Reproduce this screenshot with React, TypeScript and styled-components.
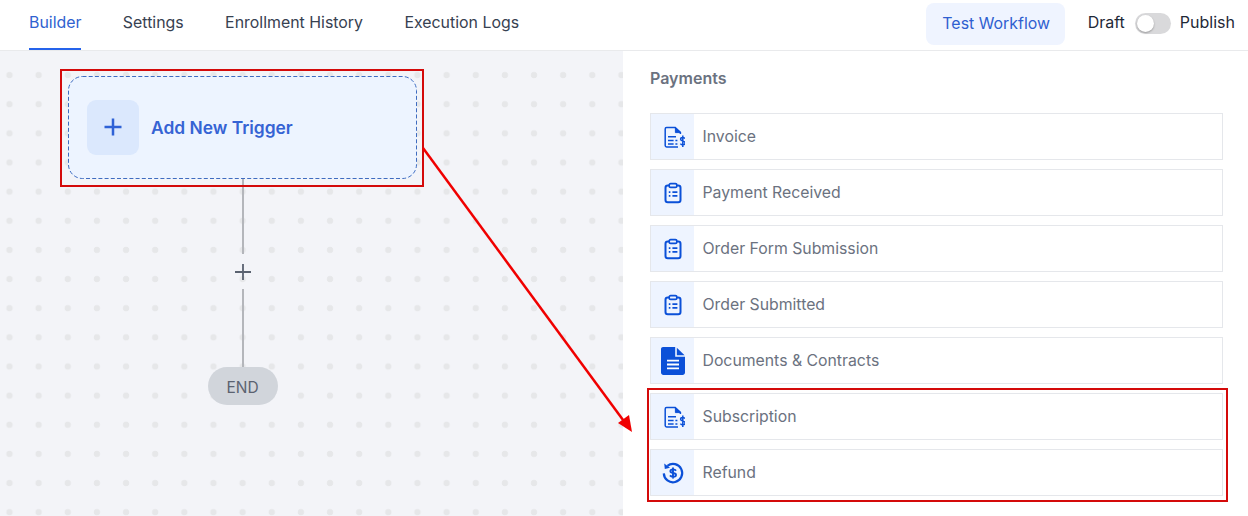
import React, { useState } from "react";
import styled, { createGlobalStyle } from "styled-components";

const BLUE = "#0b50d8";

const InvoiceIcon = () => (
  <svg width="24" height="24" viewBox="0 0 24 24" fill="none" stroke={BLUE} strokeWidth="1.5">
    <path d="M19.4 9V7.4L14.2 2.6H5.6C4.7 2.6 4.2 3.1 4.2 4V20.6C4.2 21.5 4.7 22 5.6 22H17" />
    <path d="M14.4 2.8V7.6H19.2Z" fill={BLUE} strokeWidth="1" />
    <path d="M7 11.8H15M7 15.4H12.6M14.4 15.4H16.4M7 19H12.6M14.4 19H16.4" />
    <path d="M24 13.6C23.5 12.9 22.7 12.5 21.7 12.5C20.5 12.5 19.6 13.2 19.6 14.2C19.6 16.6 24.2 15.6 24.2 18C24.2 19.1 23.3 19.8 21.9 19.8C20.8 19.8 19.9 19.3 19.4 18.6M21.8 10.6V22" />
  </svg>
);

const ClipboardIcon = () => (
  <svg width="24" height="24" viewBox="0 0 24 24" fill="none" stroke={BLUE} strokeWidth="2">
    <path d="M8 4.4H6.8C5.5 4.4 4.5 5.4 4.5 6.7V18.9C4.5 20.2 5.5 21.2 6.8 21.2H17.2C18.5 21.2 19.5 20.2 19.5 18.9V6.7C19.5 5.4 18.5 4.4 17.2 4.4H16" />
    <rect x="8.2" y="2.6" width="7.6" height="3.8" rx="1.4" strokeWidth="1.7" />
    <path d="M7.8 11.2H9.4M11.4 11.2H16.4M7.8 14.8H9.4M11.4 14.8H16.4" strokeWidth="1.8" />
  </svg>
);

const DocumentIcon = () => (
  <svg width="24" height="28" viewBox="0 0 24 28" fill="none">
    <path d="M2 0H14.2V9.8H24V25.6C24 26.9 22.9 28 21.6 28H2.4C1.1 28 0 26.9 0 25.6V2C0 .9 .9 0 2 0Z" fill={BLUE} />
    <path d="M15.8 .8L23.6 8.2H15.8Z" fill={BLUE} />
    <path d="M6 13.6H18M6 17.5H18M6 21.4H18" stroke="#fff" strokeWidth="1.8" />
  </svg>
);

const RefundIcon = () => (
  <svg width="24" height="24" viewBox="0 0 24 24" fill="none" stroke={BLUE} strokeWidth="2.2">
    <path d="M6.4 4.8A9.2 9.2 0 1 1 2.8 12.4" />
    <path d="M3.2 2.6L3.8 8L9 6.8Z" fill={BLUE} stroke="none" />
    <path d="M15 9.7C14.5 8.9 13.4 8.4 12.1 8.4C10.5 8.4 9.4 9.1 9.4 10.2C9.4 12.7 15 11.4 15 13.9C15 15 13.8 15.7 12.1 15.7C10.7 15.7 9.6 15.2 9 14.4M12 6.6V17.5" strokeWidth="1.9" />
  </svg>
);

const triggers = [
  { label: "Invoice", icon: <InvoiceIcon /> },
  { label: "Payment Received", icon: <ClipboardIcon /> },
  { label: "Order Form Submission", icon: <ClipboardIcon /> },
  { label: "Order Submitted", icon: <ClipboardIcon /> },
  { label: "Documents & Contracts", icon: <DocumentIcon /> },
  { label: "Subscription", icon: <InvoiceIcon /> },
  { label: "Refund", icon: <RefundIcon /> },
];

const tabs = ["Builder", "Settings", "Enrollment History", "Execution Logs"];

const App = () => {
  const [active, setActive] = useState("Builder");
  const [published, setPublished] = useState(false);

  return (
    <Page>
      <GlobalStyle />
      <Header>
        <Tabs>
          {tabs.map((tab) => (
            <Tab key={tab} $active={tab === active} onClick={() => setActive(tab)}>
              {tab}
            </Tab>
          ))}
        </Tabs>
        <Actions>
          <TestButton>Test Workflow</TestButton>
          <ToggleLabel>Draft</ToggleLabel>
          <Toggle onClick={() => setPublished(!published)}>
            <Knob $on={published} />
          </Toggle>
          <ToggleLabel>Publish</ToggleLabel>
        </Actions>
      </Header>
      <Main>
        <Canvas>
          <Flow>
            <TriggerCard>
              <DashedEdge>
                <rect x="0.5" y="0.5" width="348" height="102" rx="14" fill="none" stroke="#3f6cc0" strokeDasharray="4 2.2" />
              </DashedEdge>
              <TriggerIcon>
                <svg width="20" height="20" viewBox="0 0 20 20" fill="none" stroke="#2f62d6" strokeWidth="2.5">
                  <path d="M10 1.5V18.5M1.5 10H18.5" />
                </svg>
              </TriggerIcon>
              <TriggerText>Add New Trigger</TriggerText>
            </TriggerCard>
            <Line $height={75} />
            <AddStep>
              <svg width="16" height="16" viewBox="0 0 16 16" fill="none" stroke="#5a6270" strokeWidth="1.8">
                <path d="M8 0V16M0 8H16" />
              </svg>
            </AddStep>
            <Line $height={78} />
            <EndPill>END</EndPill>
          </Flow>
        </Canvas>
        <Panel>
          <PanelTitle>Payments</PanelTitle>
          <List>
            {triggers.map((item) => (
              <Row key={item.label}>
                <RowIcon>{item.icon}</RowIcon>
                <RowLabel>{item.label}</RowLabel>
              </Row>
            ))}
          </List>
        </Panel>
      </Main>
      <SourceBox />
      <TargetBox />
      <Arrow width="1248" height="516" viewBox="0 0 1248 516">
        <line x1="423" y1="148" x2="626" y2="424" stroke="#f00000" strokeWidth="2.5" />
        <path d="M632 432L618 423L629 415Z" fill="#f00000" />
      </Arrow>
    </Page>
  );
};

export default App;

const GlobalStyle = createGlobalStyle`
  html, body {
    margin: 0;
    padding: 0;
    background: #fff;
  }
  * {
    box-sizing: border-box;
  }
`;

const Page = styled.div`
  position: relative;
  width: 1248px;
  height: 516px;
  overflow: hidden;
  font-family: Inter, "Liberation Sans", sans-serif;
`;

const Header = styled.div`
  display: flex;
  justify-content: space-between;
  height: 51px;
  padding: 0 13px 0 29px;
  border-bottom: 1px solid #e9eaec;
`;

const Tabs = styled.div`
  display: flex;
  gap: 41.4px;
`;

const Tab = styled.div<{ $active: boolean }>`
  height: 50px;
  padding-top: 13px;
  font-size: 15.9px;
  line-height: 19px;
  color: ${(p) => (p.$active ? "#2f62d0" : "#374151")};
  border-bottom: 2px solid ${(p) => (p.$active ? "#2563eb" : "transparent")};
  cursor: pointer;
`;

const Actions = styled.div`
  display: flex;
  align-items: flex-start;
  padding-top: 3px;
`;

const TestButton = styled.button`
  width: 139px;
  height: 42px;
  margin-right: 23px;
  padding: 0 0 2px 2px;
  border: none;
  border-radius: 8px;
  background: #eff4ff;
  color: #2f5fd0;
  font-family: inherit;
  font-size: 15.9px;
`;

const ToggleLabel = styled.span`
  padding-top: 10px;
  font-size: 16px;
  line-height: 19px;
  color: #1f2937;
`;

const Toggle = styled.div`
  width: 36px;
  height: 21px;
  margin: 10px 9px 0 10px;
  padding: 2px;
  border-radius: 11px;
  background: #d9d9db;
  cursor: pointer;
`;

const Knob = styled.div<{ $on: boolean }>`
  width: 17px;
  height: 17px;
  margin-left: ${(p) => (p.$on ? "15px" : "0")};
  border-radius: 50%;
  background: #fff;
  box-shadow: 0 1px 2px rgba(0, 0, 0, 0.3);
`;

const Main = styled.div`
  display: flex;
  height: 465px;
`;

const Canvas = styled.div`
  width: 623px;
  padding: 25px 0 0 68px;
  background-color: #f3f4f8;
  background-image: radial-gradient(circle, #e6e7e9 3px, transparent 3.5px);
  background-size: 29.15px 29.15px;
  background-position: -5.1px 9.5px;
`;

const Flow = styled.div`
  display: flex;
  flex-direction: column;
  align-items: center;
  width: 349px;
`;

const TriggerCard = styled.div`
  position: relative;
  display: flex;
  align-items: center;
  gap: 12px;
  width: 349px;
  height: 103px;
  padding-left: 19px;
  border-radius: 14px;
  background: #edf4ff;
`;

const DashedEdge = styled.svg`
  position: absolute;
  left: 0;
  top: 0;
  width: 349px;
  height: 103px;
`;

const TriggerIcon = styled.div`
  display: flex;
  align-items: center;
  justify-content: center;
  width: 52px;
  height: 55px;
  padding-bottom: 1px;
  border-radius: 9px;
  background: #dbe8fd;
`;

const TriggerText = styled.div`
  font-size: 17.4px;
  line-height: 21px;
  font-weight: 600;
  color: #3563d4;
`;

const Line = styled.div<{ $height: number }>`
  width: 2px;
  height: ${(p) => p.$height}px;
  background: #b4b6bb;
`;

const AddStep = styled.div`
  display: flex;
  align-items: center;
  justify-content: center;
  height: 35px;
`;

const EndPill = styled.div`
  display: flex;
  align-items: center;
  justify-content: center;
  width: 70px;
  height: 38px;
  padding-top: 2px;
  border-radius: 19px;
  background: #d1d5db;
  font-size: 15.5px;
  color: #5b6270;
`;

const Panel = styled.div`
  flex: 1;
  padding: 18px 25px 0 27px;
  background: #fff;
`;

const PanelTitle = styled.div`
  height: 44px;
  font-size: 16px;
  font-weight: 600;
  line-height: 18px;
  color: #6b7280;
`;

const List = styled.div`
  display: flex;
  flex-direction: column;
  gap: 9px;
`;

const Row = styled.div`
  display: flex;
  align-items: center;
  height: 47px;
  border: 1px solid #e5e7eb;
`;

const RowIcon = styled.div`
  display: flex;
  align-items: center;
  justify-content: center;
  width: 43px;
  height: 100%;
  background: #eef4ff;
`;

const RowLabel = styled.div`
  margin: 0 0 1px 8.5px;
  font-size: 15.8px;
  color: #6b7280;
`;

const SourceBox = styled.div`
  position: absolute;
  left: 60px;
  top: 69px;
  width: 364px;
  height: 118px;
  border: 2px solid #d40a0a;
`;

const TargetBox = styled.div`
  position: absolute;
  left: 647px;
  top: 388px;
  width: 581px;
  height: 114px;
  border: 2px solid #d40a0a;
`;

const Arrow = styled.svg`
  position: absolute;
  left: 0;
  top: 0;
  pointer-events: none;
`;
